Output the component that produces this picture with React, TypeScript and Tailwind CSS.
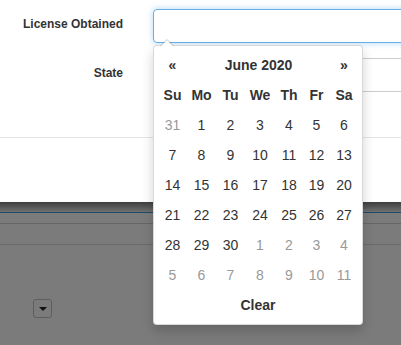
import React from "react";

type Day = { n: number; muted?: boolean };

const weeks: Day[][] = [
  [{ n: 31, muted: true }, { n: 1 }, { n: 2 }, { n: 3 }, { n: 4 }, { n: 5 }, { n: 6 }],
  [{ n: 7 }, { n: 8 }, { n: 9 }, { n: 10 }, { n: 11 }, { n: 12 }, { n: 13 }],
  [{ n: 14 }, { n: 15 }, { n: 16 }, { n: 17 }, { n: 18 }, { n: 19 }, { n: 20 }],
  [{ n: 21 }, { n: 22 }, { n: 23 }, { n: 24 }, { n: 25 }, { n: 26 }, { n: 27 }],
  [
    { n: 28 },
    { n: 29 },
    { n: 30 },
    { n: 1, muted: true },
    { n: 2, muted: true },
    { n: 3, muted: true },
    { n: 4, muted: true },
  ],
  [5, 6, 7, 8, 9, 10, 11].map((n) => ({ n, muted: true })),
];

const weekdays = ["Su", "Mo", "Tu", "We", "Th", "Fr", "Sa"];

const cols = "grid grid-cols-[29px_29px_29px_30px_28px_27px_28px]";

const DatePicker: React.FC = () => {
  return (
    <div className="absolute left-[153px] top-[45px] w-[210px] bg-white border border-[rgba(0,0,0,0.15)] rounded-[4px] shadow-[0_6px_12px_rgba(0,0,0,0.18)] p-[4px] text-[14px] text-[#333]">
      {/* caret */}
      <span className="absolute -top-[7px] left-[6px] w-0 h-0 border-x-[7px] border-x-transparent border-b-[7px] border-b-[rgba(0,0,0,0.2)]" />
      <span className="absolute -top-[6px] left-[7px] w-0 h-0 border-x-[6px] border-x-transparent border-b-[6px] border-b-white" />

      {/* Header */}
      <div className={`${cols} h-[30px] items-center text-center font-bold`}>
        <span>«</span>
        <span className="col-span-5">June 2020</span>
        <span>»</span>
      </div>

      <div className={`${cols} h-[30px] items-center text-center font-bold`}>
        {weekdays.map((d) => (
          <span key={d}>{d}</span>
        ))}
      </div>

      {weeks.map((week, wi) => (
        <div key={wi} className={`${cols} h-[30px] items-center text-center`}>
          {week.map((day, di) => (
            <span key={di} className={day.muted ? "text-[#999]" : "text-[#333]"}>
              {day.n}
            </span>
          ))}
        </div>
      ))}

      {/* Footer */}
      <div className="h-[30px] flex items-center justify-center font-bold">Clear</div>
    </div>
  );
};

const App: React.FC = () => {
  return (
    <div className="relative w-[401px] h-[345px] overflow-hidden bg-[#7b7b7b] font-['Liberation_Sans',Arial,sans-serif]">
      {/* Modal */}
      <div className="h-[202px] bg-white flex flex-col">
        <div className="pt-[9px] space-y-[15px] border-b border-[#e5e5e5] h-[138px]">
          <div className="flex">
            <label className="w-[123px] shrink-0 text-right pt-[7px] text-[12px] leading-[17px] font-bold text-[#333]">
              License Obtained
            </label>
            <div className="ml-[30px] w-[300px] shrink-0 h-[34px] rounded-[4px] border border-[#66afe9] shadow-[0_0_6px_rgba(102,175,233,0.5)]" />
          </div>
          <div className="flex">
            <label className="w-[123px] shrink-0 text-right pt-[7px] text-[12px] leading-[17px] font-bold text-[#333]">
              State
            </label>
            <div className="ml-[30px] w-[300px] shrink-0 h-[34px] rounded-[4px] border border-[#ccc]" />
          </div>
        </div>
      </div>

      {/* Page behind backdrop */}
      <div className="h-[10px] bg-gradient-to-b from-[#3e3e3e] to-[#717171]" />
      <div className="h-px bg-[#1d4a6b]" />
      <div className="h-[10px]" />
      <div className="h-px bg-[#666]" />
      <div className="h-[20px]" />
      <div className="h-px bg-[#6a6a6a]" />
      <div className="pt-[54px] pl-[33px]">
        <div className="w-[19px] h-[19px] rounded-[3px] border border-[#5e5e5e] flex items-center justify-center">
          <span className="w-0 h-0 border-x-[4px] border-x-transparent border-t-[4px] border-t-[#111]" />
        </div>
      </div>

      <DatePicker />
    </div>
  );
};

export default App;
